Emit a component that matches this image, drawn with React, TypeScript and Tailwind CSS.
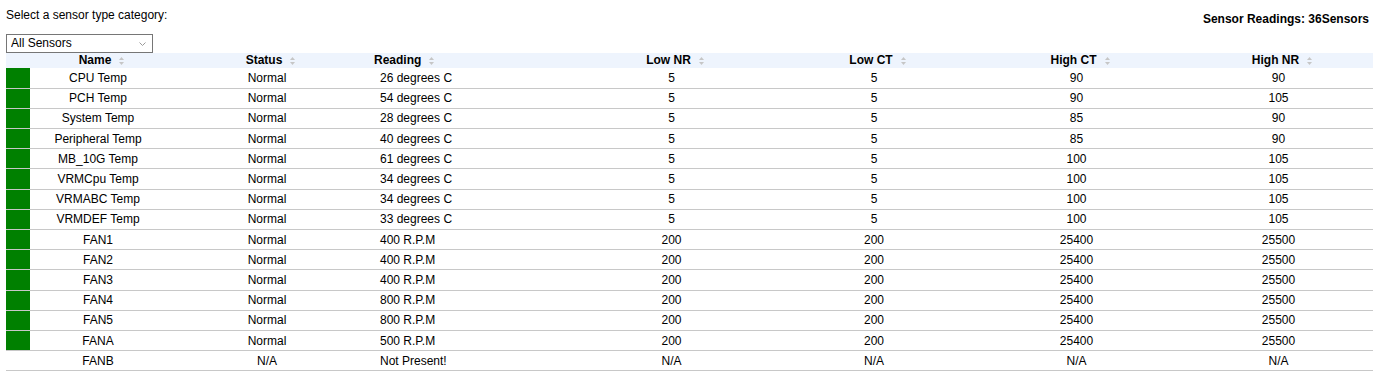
import React from 'react';

interface SensorRow {
  name: string;
  status: string;
  reading: string;
  lowNR: string;
  lowCT: string;
  highCT: string;
  highNR: string;
  present: boolean;
}

const TEMP = (name: string, reading: number, highCT: number, highNR: number): SensorRow => ({
  name,
  status: 'Normal',
  reading: `${reading} degrees C`,
  lowNR: '5',
  lowCT: '5',
  highCT: String(highCT),
  highNR: String(highNR),
  present: true,
});

const FAN = (name: string, rpm: number): SensorRow => ({
  name,
  status: 'Normal',
  reading: `${rpm} R.P.M`,
  lowNR: '200',
  lowCT: '200',
  highCT: '25400',
  highNR: '25500',
  present: true,
});

const SENSORS: SensorRow[] = [
  TEMP('CPU Temp', 26, 90, 90),
  TEMP('PCH Temp', 54, 90, 105),
  TEMP('System Temp', 28, 85, 90),
  TEMP('Peripheral Temp', 40, 85, 90),
  TEMP('MB_10G Temp', 61, 100, 105),
  TEMP('VRMCpu Temp', 34, 100, 105),
  TEMP('VRMABC Temp', 34, 100, 105),
  TEMP('VRMDEF Temp', 33, 100, 105),
  FAN('FAN1', 400),
  FAN('FAN2', 400),
  FAN('FAN3', 400),
  FAN('FAN4', 800),
  FAN('FAN5', 800),
  FAN('FANA', 500),
  {
    name: 'FANB',
    status: 'N/A',
    reading: 'Not Present!',
    lowNR: 'N/A',
    lowCT: 'N/A',
    highCT: 'N/A',
    highNR: 'N/A',
    present: false,
  },
];

const SortIcon = () => (
  <svg width="5" height="8" viewBox="0 0 5 8" className="shrink-0">
    <polygon points="0,3 2.5,0 5,3" fill="#c6c6c6" />
    <polygon points="0,5 2.5,8 5,5" fill="#c6c6c6" />
  </svg>
);

const HeaderCell: React.FC<{ label: string; left?: boolean }> = ({ label, left }) => (
  <th className="h-[15px] p-0 font-bold">
    <div
      className={`flex items-center gap-[8px] ${left ? 'justify-start pl-[6px]' : 'justify-center pl-[7px]'}`}
    >
      <span>{label}</span>
      <SortIcon />
    </div>
  </th>
);

export default function App() {
  return (
    <div
      className="w-full overflow-hidden bg-white text-[12px] text-black"
      style={{ fontFamily: '"Liberation Sans", Arial, sans-serif' }}
    >
      {/* Top bar */}
      <div className="flex items-start justify-between pl-[6px] pr-[4px] pt-[8px]">
        <span className="leading-[14px]">Select a sensor type category:</span>
        <span className="mt-[4px] font-bold leading-[14px]">Sensor Readings: 36Sensors</span>
      </div>

      {/* Category select */}
      <div className="relative ml-[6px] mt-[8px] h-[19px] w-[147px]">
        <select className="h-full w-full appearance-none border border-[#767676] bg-white pl-[4px] text-[12px] leading-[17px] text-black outline-none">
          <option>All Sensors</option>
        </select>
        <svg
          width="7"
          height="4"
          viewBox="0 0 7 4"
          className="pointer-events-none absolute right-[7px] top-[8px]"
        >
          <polyline points="0.5,0.5 3.5,3.5 6.5,0.5" fill="none" stroke="#9a9a9a" strokeWidth="1" />
        </svg>
      </div>

      {/* Sensor table */}
      <table className="ml-[6px] w-[1373px] table-fixed border-collapse">
        <colgroup>
          <col className="w-[24px]" />
          <col className="w-[136px]" />
          <col className="w-[202px]" />
          <col className="w-[202px]" />
          <col className="w-[203px]" />
          <col className="w-[202px]" />
          <col className="w-[203px]" />
          <col className="w-[201px]" />
        </colgroup>
        <thead>
          <tr className="bg-[#eef4fd] leading-[15px]">
            <th className="h-[15px] p-0" />
            <HeaderCell label="Name" />
            <HeaderCell label="Status" />
            <HeaderCell label="Reading" left />
            <HeaderCell label="Low NR" />
            <HeaderCell label="Low CT" />
            <HeaderCell label="High CT" />
            <HeaderCell label="High NR" />
          </tr>
        </thead>
        <tbody>
          {SENSORS.map((s) => (
            <tr key={s.name} className="border-b border-[#c8c8c8] leading-[14px]">
              <td className={`h-[20.2px] p-0 ${s.present ? 'bg-[#008000]' : ''}`} />
              <td className="p-0 text-center">{s.name}</td>
              <td className="p-0 text-center">{s.status}</td>
              <td className="p-0 pl-[12px] text-left">{s.reading}</td>
              <td className="p-0 text-center">{s.lowNR}</td>
              <td className="p-0 text-center">{s.lowCT}</td>
              <td className="p-0 text-center">{s.highCT}</td>
              <td className="p-0 text-center">{s.highNR}</td>
            </tr>
          ))}
        </tbody>
      </table>
    </div>
  );
}
